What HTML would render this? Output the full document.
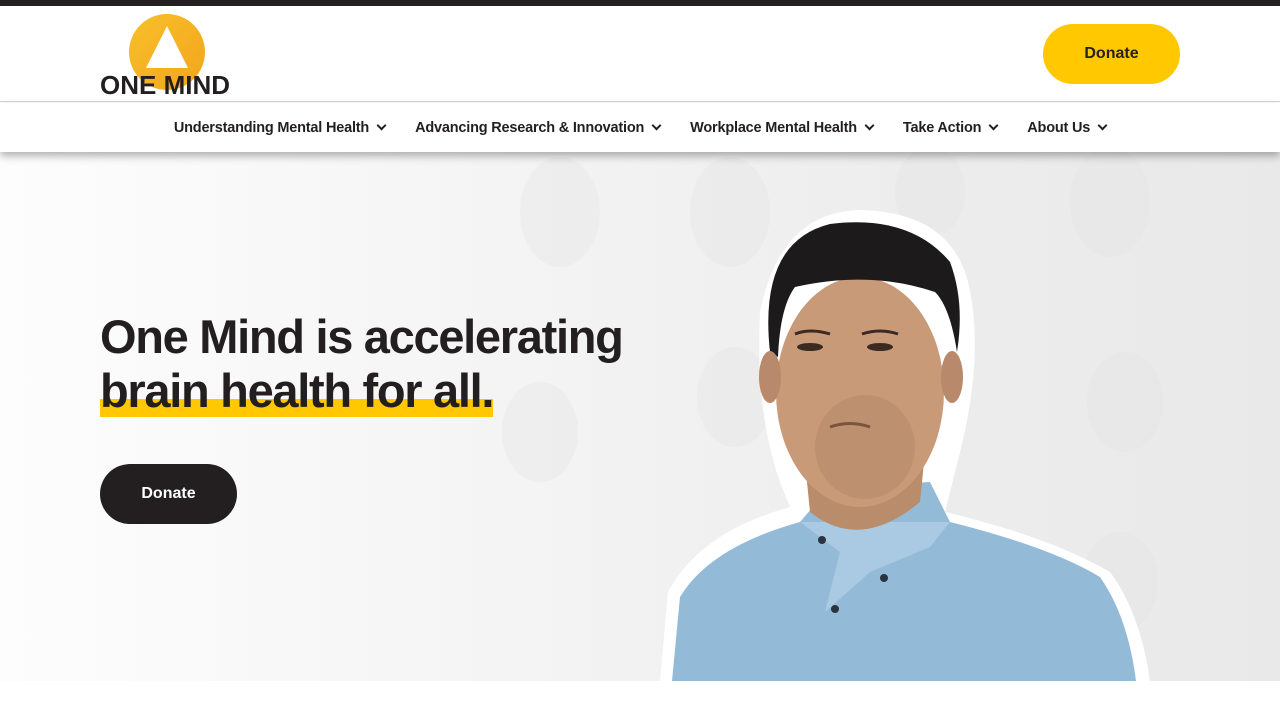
<!DOCTYPE html>
<html><head><meta charset="utf-8"><style>
*{margin:0;padding:0;box-sizing:border-box}
body{width:1280px;height:720px;overflow:hidden;background:#fff;font-family:"Liberation Sans",sans-serif;color:#231f20;position:relative}
.top{position:absolute;left:0;top:0;width:1280px;height:6px;background:#231f20}
.header{position:absolute;top:6px;left:0;width:1280px;height:96px;background:#fff;border-bottom:1px solid #d6d6d6}
.btn{position:absolute;border-radius:30px;font-weight:bold;font-size:16px;display:flex;align-items:center;justify-content:center}
.nav{position:absolute;top:103px;left:0;width:1280px;height:49px;background:#fff;box-shadow:0 4px 8px rgba(0,0,0,.3);z-index:2;display:flex;justify-content:center;align-items:center;gap:0}
.nav span{font-size:14.5px;font-weight:bold;margin:0 15px;white-space:nowrap;letter-spacing:-0.2px}
.nav span:after{content:"";display:inline-block;width:5px;height:5px;border-right:2px solid #231f20;border-bottom:2px solid #231f20;transform:rotate(45deg);margin-left:9px;position:relative;top:-3px}
.hero{position:absolute;top:152px;left:0;width:1280px;height:529px;background:linear-gradient(90deg,#fdfdfd 0%,#f4f4f4 40%,#ededed 70%,#e9e9e9 100%);overflow:hidden}
h1{position:absolute;left:100px;top:310px;font-size:47px;line-height:54px;font-weight:bold;letter-spacing:-1.3px;z-index:3}
.hl{background:linear-gradient(transparent 66%,#ffc800 66%)}
</style></head><body>
<div class="top"></div>
<div class="header">
<svg style="position:absolute;left:98px;top:6px" width="138" height="84" viewBox="0 0 138 84">
<defs><linearGradient id="g" x1="0" y1="0" x2="1" y2="1"><stop offset="0" stop-color="#f7c02a"/><stop offset="1" stop-color="#f3a51c"/></linearGradient></defs>
<circle cx="69" cy="40" r="38" fill="url(#g)"/>
<polygon points="69,14 48,56 90,56" fill="#fff"/>
<text x="2" y="82" font-family="Liberation Sans" font-weight="bold" font-size="26" fill="#231f20" textLength="130" lengthAdjust="spacingAndGlyphs">ONE MIND</text>
</svg>
<div class="btn" style="left:1043px;top:18px;width:137px;height:60px;background:#ffc800">Donate</div>
</div>
<div class="nav"><span>Understanding Mental Health</span><span>Advancing Research &amp; Innovation</span><span>Workplace Mental Health</span><span>Take Action</span><span>About Us</span></div>
<div class="hero">
<svg width="1280" height="529" style="position:absolute;left:0;top:0">
<g fill="#e2e2e2" opacity=".3">
<ellipse cx="560" cy="60" rx="40" ry="55"/><ellipse cx="1110" cy="50" rx="40" ry="55"/><ellipse cx="930" cy="40" rx="35" ry="45"/><ellipse cx="730" cy="60" rx="40" ry="55"/>
<ellipse cx="1125" cy="250" rx="38" ry="50"/><ellipse cx="735" cy="245" rx="38" ry="50"/><ellipse cx="1120" cy="430" rx="38" ry="50"/><ellipse cx="540" cy="280" rx="38" ry="50"/>
</g>
<path d="M660 529 L668 440 Q700 380 790 355 L780 330 Q755 260 760 160 Q780 60 860 58 Q950 60 968 130 Q985 200 960 300 L945 360 Q1050 385 1110 420 Q1140 460 1150 529 Z" fill="#fff"/>
<path d="M672 529 L680 445 Q710 395 800 370 L830 335 L930 330 L950 370 Q1050 395 1100 425 Q1128 465 1136 529 Z" fill="#93bbd8"/>
<path d="M800 370 L840 400 L825 460 L870 420 L930 395 L950 370 Z" fill="#a9cae2"/>
<path d="M805 310 L810 360 Q860 400 920 350 L925 300 Z" fill="#b98c6c"/>
<ellipse cx="860" cy="240" rx="84" ry="115" fill="#c99a78"/>
<ellipse cx="865" cy="295" rx="50" ry="52" fill="#a37a5c" opacity=".3"/>
<path d="M770 200 Q758 90 830 72 Q910 62 950 110 Q965 150 957 200 Q950 155 935 140 Q870 118 795 135 Q780 155 778 205 Z" fill="#1c1a1b"/>
<ellipse cx="770" cy="225" rx="11" ry="26" fill="#b8896a"/><ellipse cx="952" cy="225" rx="11" ry="26" fill="#b8896a"/>
<ellipse cx="810" cy="195" rx="13" ry="4" fill="#3a2a22"/><ellipse cx="880" cy="195" rx="13" ry="4" fill="#3a2a22"/>
<path d="M795 182 Q810 176 830 182 M862 182 Q880 176 898 182" stroke="#3a2a22" stroke-width="3" fill="none"/>
<path d="M830 275 Q850 268 870 275" stroke="#7a5440" stroke-width="3" fill="none"/>
<circle cx="822" cy="388" r="4" fill="#2a3340"/><circle cx="835" cy="457" r="4" fill="#2a3340"/><circle cx="884" cy="426" r="4" fill="#2a3340"/>
</svg>
</div>
<h1>One Mind is accelerating<br><span class="hl">brain health for all.</span></h1>
<div class="btn" style="left:100px;top:464px;width:137px;height:60px;background:#231f20;color:#fff;z-index:3">Donate</div>
</body></html>
